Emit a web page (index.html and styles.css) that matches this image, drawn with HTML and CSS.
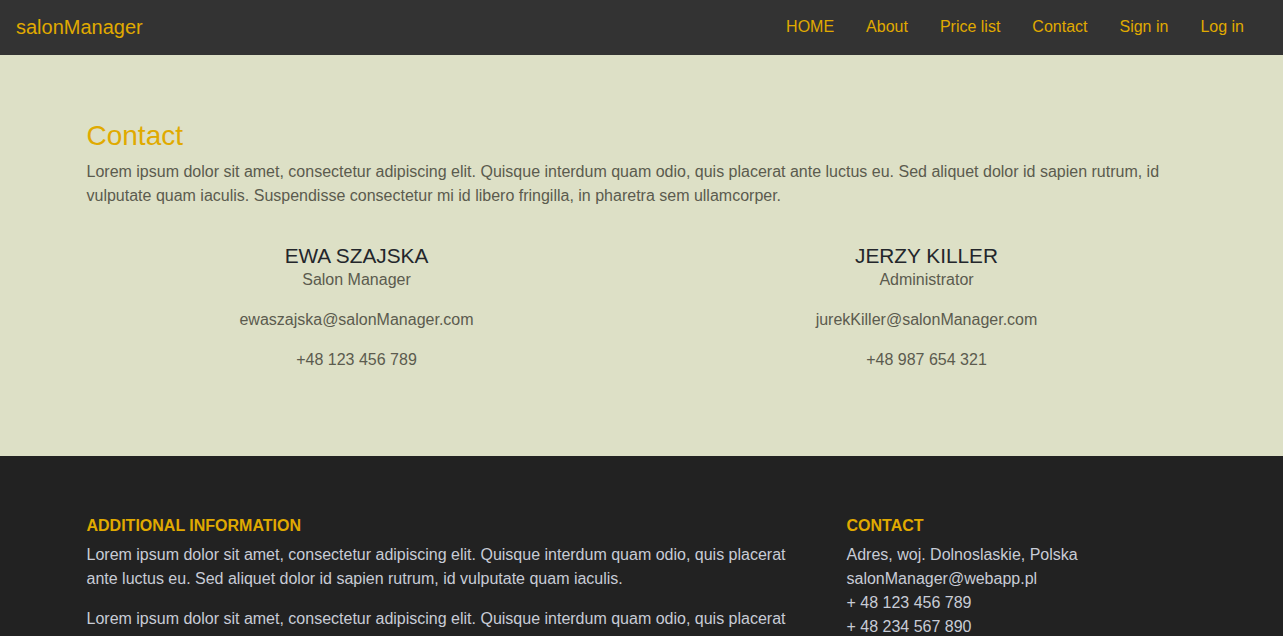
FILE: index.html
```html
<!DOCTYPE html>
<html lang="en">
<head>
<meta charset="utf-8">
<title>salonManager - Contact</title>
<link rel="stylesheet" href="styles.css">
</head>
<body>
<nav class="navbar">
  <a class="brand" href="#">salonManager</a>
  <ul class="nav-links">
    <li><a href="#">HOME</a></li>
    <li><a href="#">About</a></li>
    <li><a href="#">Price list</a></li>
    <li><a href="#">Contact</a></li>
    <li><a href="#">Sign in</a></li>
    <li><a href="#">Log in</a></li>
  </ul>
</nav>
<section class="main">
  <div class="container">
    <h3 class="page-title">Contact</h3>
    <p class="intro">Lorem ipsum dolor sit amet, consectetur adipiscing elit. Quisque interdum quam odio, quis placerat ante luctus eu. Sed aliquet dolor id sapien rutrum, id vulputate quam iaculis. Suspendisse consectetur mi id libero fringilla, in pharetra sem ullamcorper.</p>
    <div class="people">
      <div class="person">
        <h5 class="name">EWA SZAJSKA</h5>
        <p class="role">Salon Manager</p>
        <p>ewaszajska@salonManager.com</p>
        <p>+48 123 456 789</p>
      </div>
      <div class="person">
        <h5 class="name">JERZY KILLER</h5>
        <p class="role">Administrator</p>
        <p>jurekKiller@salonManager.com</p>
        <p>+48 987 654 321</p>
      </div>
    </div>
  </div>
</section>
<footer class="footer">
  <div class="container footer-row">
    <div class="footer-info">
      <h6 class="footer-title">ADDITIONAL INFORMATION</h6>
      <p>Lorem ipsum dolor sit amet, consectetur adipiscing elit. Quisque interdum quam odio, quis placerat ante luctus eu. Sed aliquet dolor id sapien rutrum, id vulputate quam iaculis.</p>
      <p>Lorem ipsum dolor sit amet, consectetur adipiscing elit. Quisque interdum quam odio, quis placerat ante luctus eu. Sed aliquet dolor id sapien rutrum, id vulputate quam iaculis.</p>
    </div>
    <div class="footer-contact">
      <h6 class="footer-title">CONTACT</h6>
      <p class="contact-lines">Adres, woj. Dolnoslaskie, Polska<br>salonManager@webapp.pl<br>+ 48 123 456 789<br>+ 48 234 567 890</p>
    </div>
  </div>
</footer>
</body>
</html>
```
FILE: styles.css
```css
* { box-sizing: border-box; }
html, body { margin: 0; padding: 0; }
body {
  font-family: "Liberation Sans", Arial, sans-serif;
  font-size: 16px;
  line-height: 1.5;
  background: #222222;
}
a { text-decoration: none; }
p { margin: 0 0 16px; }

.navbar {
  height: 55px;
  background: #333333;
  display: flex;
  align-items: center;
  justify-content: space-between;
  padding: 0 23px 0 16px;
}
.brand {
  color: #e0aa00;
  font-size: 20px;
  line-height: 30px;
  margin-top: -2px;
}
.nav-links {
  list-style: none;
  margin: 0;
  padding: 0;
  display: flex;
}
.nav-links a {
  display: block;
  color: #e0aa00;
  padding: 8px 16px;
  line-height: 20px;
  font-size: 16px;
  margin-top: -2px;
}

.container {
  width: 1140px;
  margin: 0 auto;
  padding: 0 15px;
}

.main {
  background: #dde0c6;
  padding: 60px 0 68px;
  color: #5b5b4e;
}
.page-title {
  margin: 0 0 3px;
  font-size: 28px;
  font-weight: 400;
  line-height: 42px;
  color: #e0aa00;
}
.intro { margin-bottom: 36px; }
.people {
  display: grid;
  grid-template-columns: 1fr 1fr;
  margin: 0 -15px;
}
.person {
  text-align: center;
  padding: 0 15px;
}
.name {
  margin: 0;
  font-size: 20.8px;
  font-weight: 400;
  line-height: 1.2;
  color: #23262b;
}
.role { margin-bottom: 16px; margin-top: -1px; }

.footer {
  background: #222222;
  padding: 60px 0 40px;
  color: #c8ccd6;
}
.footer-row {
  display: grid;
  grid-template-columns: 760px 380px;
  margin: 0 auto;
  padding: 0;
}
.footer-info, .footer-contact { padding: 0 15px; }
.footer-title {
  margin: 0 0 8px;
  font-size: 16px;
  font-weight: 700;
  line-height: 1.2;
  color: #e0aa00;
}
.contact-lines { margin: 0; }
```
